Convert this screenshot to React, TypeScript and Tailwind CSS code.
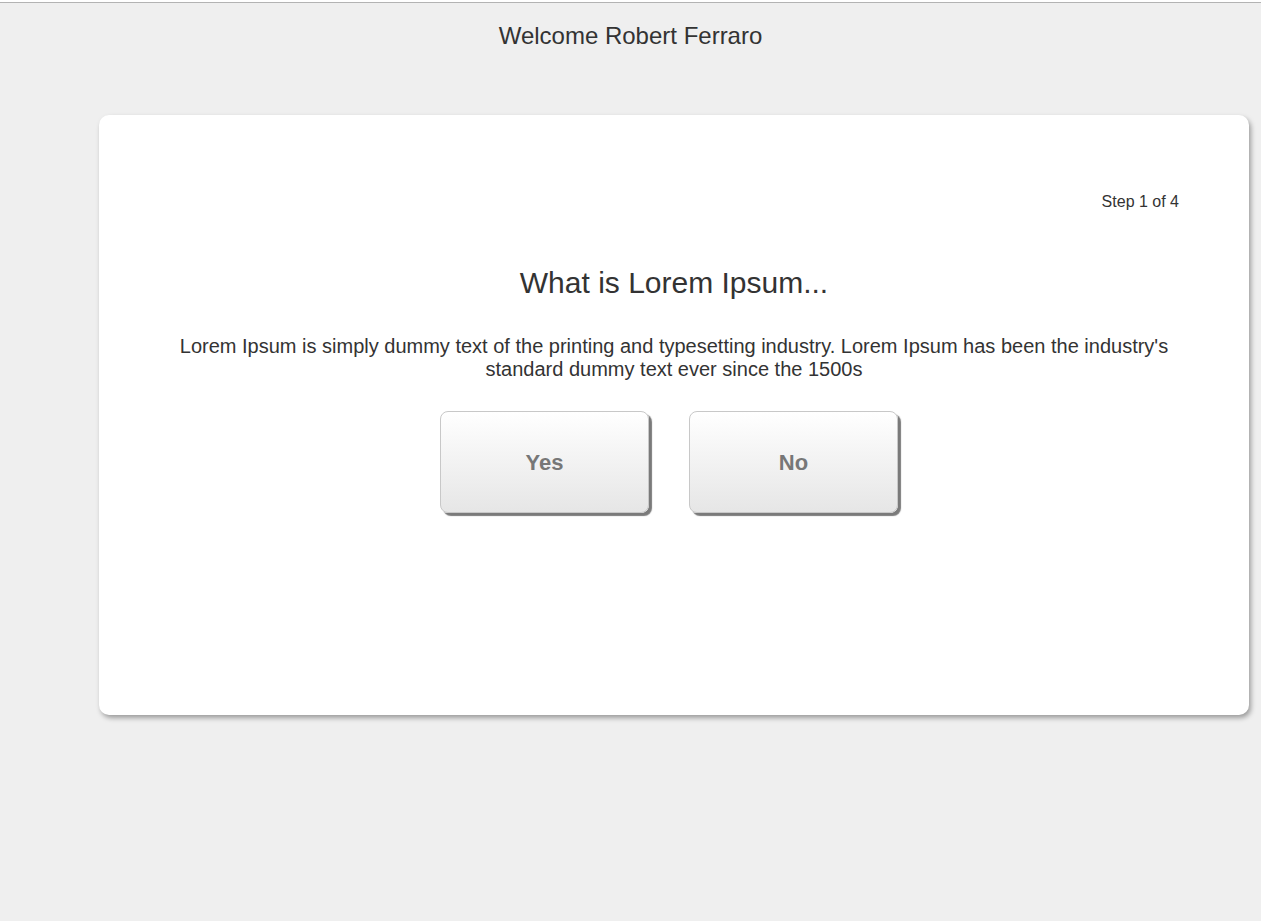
export default function App() {
  return (
    <div className="min-h-[921px] bg-[#efefef] border-t border-[#b3b3b3] mt-[2px] font-['Liberation_Sans',Arial,sans-serif] text-[#333]">
      <div className="pt-[19px] text-center text-[24px] leading-[28px] text-[#333]">Welcome Robert Ferraro</div>
      <div className="ml-[99px] mt-[65px] w-[1150px] h-[600px] bg-white rounded-[10px] shadow-[2px_3px_5px_rgba(0,0,0,0.35)] flex flex-col">
        <div className="pt-[78px] pr-[70px] text-right text-[16px] leading-[18px] text-[#333]">Step 1 of 4</div>
        <h1 className="mt-[55px] text-center text-[30px] leading-[34px] text-[#333]">What is Lorem Ipsum...</h1>
        <p className="mt-[35px] px-[60px] text-center text-[20px] leading-[23px] text-[#333]">
          Lorem Ipsum is simply dummy text of the printing and typesetting industry. Lorem Ipsum has been the industry's standard dummy text ever since the 1500s
        </p>
        <div className="mt-[30px] flex justify-center gap-[40px] pr-[10px]">
          <button className="w-[209px] h-[102px] rounded-[8px] border border-[#c8c8c8] bg-gradient-to-b from-white to-[#e6e6e6] shadow-[3px_3px_1px_#7a7a7a] text-[22px] font-bold text-[#777]">Yes</button>
          <button className="w-[209px] h-[102px] rounded-[8px] border border-[#c8c8c8] bg-gradient-to-b from-white to-[#e6e6e6] shadow-[3px_3px_1px_#7a7a7a] text-[22px] font-bold text-[#777]">No</button>
        </div>
      </div>
    </div>
  );
}
